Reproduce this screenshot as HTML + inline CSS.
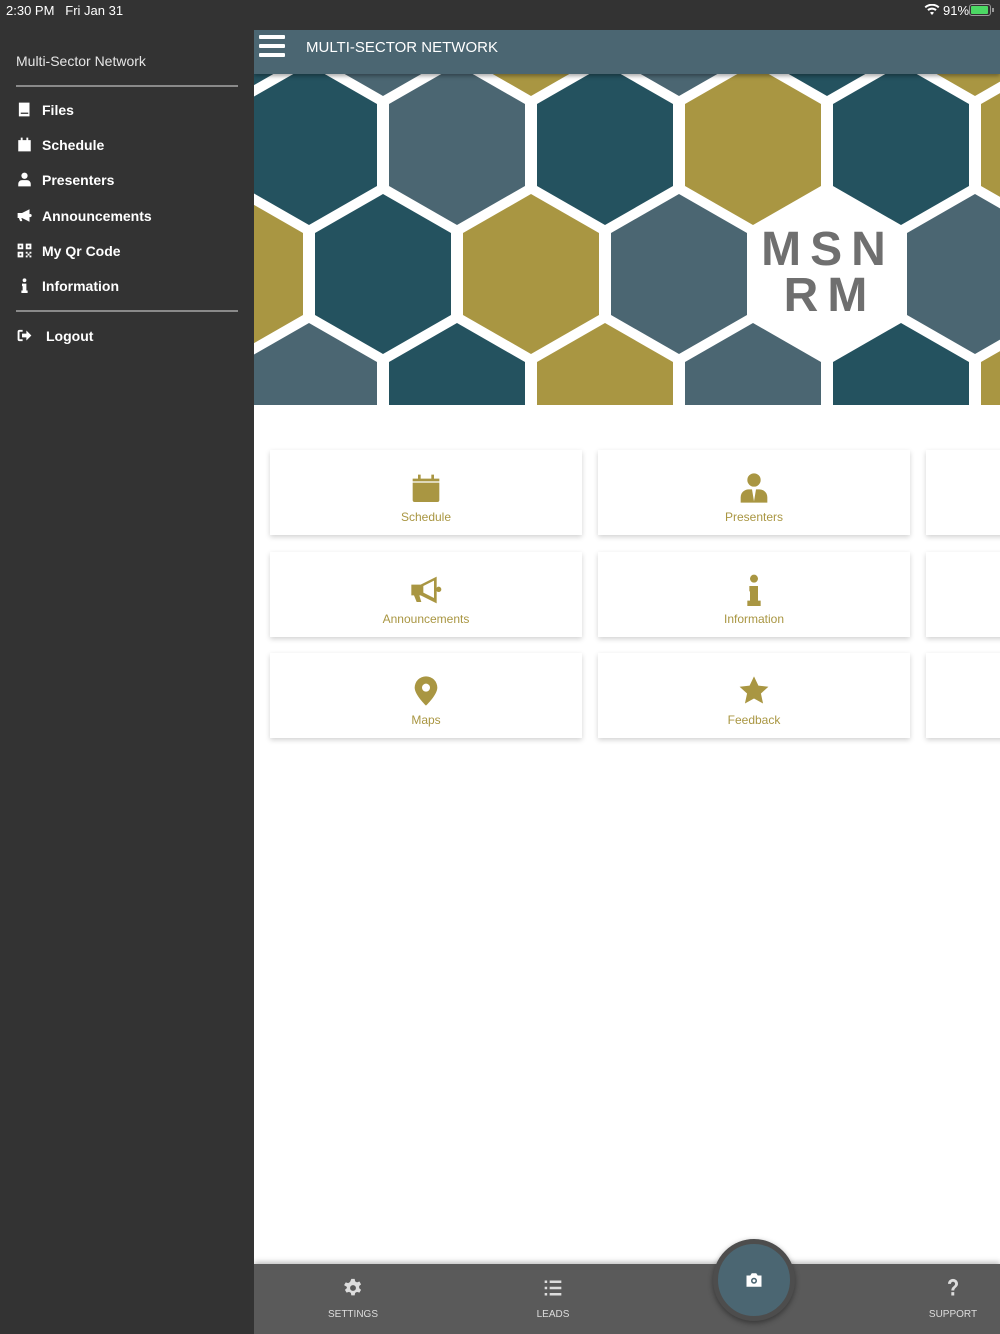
<!DOCTYPE html>
<html><head><meta charset="utf-8">
<style>
*{margin:0;padding:0;box-sizing:border-box}
body{width:1000px;height:1334px;overflow:hidden;background:#333;font-family:"Liberation Sans",sans-serif;position:relative}
.status{position:absolute;left:0;top:0;width:1000px;height:30px;background:#333;color:#fff;font-size:13px}
.side{position:absolute;left:0;top:30px;width:254px;height:1304px;background:#333}
.side .t{position:absolute;left:16px;top:23px;color:#e6e6e6;font-size:14px}
.side .ln{position:absolute;left:16px;width:222px;height:2px;background:#8a8a8a}
.item{position:absolute;left:0;height:20px;width:254px;color:#fff;font-weight:bold;font-size:14px}
.item svg{position:absolute;left:17px;top:2px;width:15px;height:15px;fill:#fff}
.item span{position:absolute;left:42px;top:2px}
.main{position:absolute;left:254px;top:30px;width:746px;height:1304px;background:#fff;overflow:hidden}
.hdr{position:absolute;left:0;top:0;width:746px;height:44px;background:#4b6672;box-shadow:0 2px 4px rgba(0,0,0,.35);z-index:3}
.hdr .hb{position:absolute;left:5px;width:26px;height:4px;background:#fff;border-radius:1px}
.hdr .tt{position:absolute;left:52px;top:9px;color:#fff;font-size:15px}
.card{position:absolute;width:312px;height:85px;background:#fff;box-shadow:0 2px 5px rgba(0,0,0,.18)}
.card svg{position:absolute;left:50%;top:22px;width:32px;height:32px;margin-left:-16px;fill:#a99642}
.card span{position:absolute;left:0;width:100%;text-align:center;top:60px;color:#a99642;font-size:12px}
.bb{position:absolute;left:0;top:1234px;width:746px;height:70px;background:#5a5a5a;box-shadow:0 -2px 5px rgba(0,0,0,.25)}
.bi{position:absolute;top:14px;width:100px;margin-left:-50px;text-align:center;color:#ddd;font-size:10px}
.bi svg{display:block;margin:0 auto 11px;width:20px;height:20px;fill:#ddd}
.fab{position:absolute;left:459px;top:1209px;width:82px;height:82px;border-radius:50%;background:#4b6672;border:5px solid #4d4d4d;box-shadow:0 2px 6px rgba(0,0,0,.4)}
</style></head><body>
<div class="status">
<span style="position:absolute;left:6px;top:3px">2:30 PM&nbsp;&nbsp; Fri Jan 31</span>
<svg style="position:absolute;left:924px;top:4px" width="16" height="12" viewBox="0 0 16 12"><path d="M8 11l2-2.4a3 3 0 0 0-4 0z M3.3 5.4l1.3 1.5a5 5 0 0 1 6.8 0l1.3-1.5a7 7 0 0 0-9.4 0z M0.6 2.6l1.3 1.5a9.2 9.2 0 0 1 12.2 0l1.3-1.5a11 11 0 0 0-14.8 0z" fill="#fff"/></svg>
<span style="position:absolute;left:943px;top:3px">91%</span>
<div style="position:absolute;left:969px;top:4px;width:22px;height:12px;border:1px solid #999;border-radius:3px;padding:1px"><div style="width:17px;height:8px;background:#4cd964;border-radius:1px"></div></div>
<div style="position:absolute;left:992px;top:8px;width:2px;height:4px;background:#999"></div>
</div>
<div class="side">
<div class="t">Multi-Sector Network</div>
<div class="ln" style="top:55px"></div>
<div class="item" style="top:70px"><svg viewBox="0 0 24 24"><path d="M3 1h17v22H3z M6 17v2h12v-2z" fill-rule="evenodd"/></svg><span>Files</span></div>
<div class="item" style="top:105px"><svg viewBox="0 0 24 24"><path d="M2 5h20v18H2z M6 1h3v4H6z M15 1h3v4h-3z"/></svg><span>Schedule</span></div>
<div class="item" style="top:140px"><svg viewBox="0 0 24 24"><circle cx="12" cy="6" r="5"/><path d="M2 23v-4a6 6 0 0 1 6-6h8a6 6 0 0 1 6 6v4z"/></svg><span>Presenters</span></div>
<div class="item" style="top:176px"><svg viewBox="0 0 24 24"><path d="M1 8h7l12-6v20l-12-6H7l1.5 5h-3.5L3 16H1z"/><circle cx="21" cy="12" r="2.5"/></svg><span>Announcements</span></div>
<div class="item" style="top:211px"><svg viewBox="0 0 24 24"><path d="M1 1h9v9H1z M4 4v3h3V4z M14 1h9v9h-9z M17 4v3h3V4z M1 14h9v9H1z M4 17v3h3v-3z M14 14h3v3h-3z M20 14h3v3h-3z M17 17h3v3h-3z M14 20h3v3h-3z M20 20h3v3h-3z" fill-rule="evenodd"/></svg><span>My Qr Code</span></div>
<div class="item" style="top:246px"><svg viewBox="0 0 24 24"><circle cx="12" cy="3.5" r="3"/><path d="M8 9h7v11h2v4H7v-4h2v-7H8z"/></svg><span>Information</span></div>
<div class="ln" style="top:280px"></div>
<div class="item" style="top:296px"><svg viewBox="0 0 24 24"><path d="M9 3H4a3 3 0 0 0-3 3v12a3 3 0 0 0 3 3h5v-3H4V6h5z M8 9h7V4l8 8-8 8v-5H8z"/></svg><span style="left:46px">Logout</span></div>
</div>
<div class="main">
<div class="hdr"><div class="hb" style="top:5px"></div><div class="hb" style="top:14px"></div><div class="hb" style="top:23px"></div><div class="tt">MULTI-SECTOR NETWORK</div></div>
<svg style="position:absolute;left:0;top:44px" width="746" height="331" viewBox="254 74 746 331">
<defs><polygon id="h" points="0,-80 68,-41 68,41 0,80 -68,41 -68,-41"/></defs>
<rect x="254" y="74" width="746" height="331" fill="#fff"/>
<use href="#h" x="235" y="16" fill="#24525f"/><use href="#h" x="383" y="16" fill="#4b6672"/><use href="#h" x="531" y="16" fill="#a99642"/><use href="#h" x="679" y="16" fill="#4b6672"/><use href="#h" x="827" y="16" fill="#24525f"/><use href="#h" x="975" y="16" fill="#a99642"/>
<use href="#h" x="309" y="145" fill="#24525f"/><use href="#h" x="457" y="145" fill="#4b6672"/><use href="#h" x="605" y="145" fill="#24525f"/><use href="#h" x="753" y="145" fill="#a99642"/><use href="#h" x="901" y="145" fill="#24525f"/><use href="#h" x="1049" y="145" fill="#a99642"/>
<use href="#h" x="235" y="274" fill="#a99642"/><use href="#h" x="383" y="274" fill="#24525f"/><use href="#h" x="531" y="274" fill="#a99642"/><use href="#h" x="679" y="274" fill="#4b6672"/><use href="#h" x="975" y="274" fill="#4b6672"/>
<use href="#h" x="309" y="403" fill="#4b6672"/><use href="#h" x="457" y="403" fill="#24525f"/><use href="#h" x="605" y="403" fill="#a99642"/><use href="#h" x="753" y="403" fill="#4b6672"/><use href="#h" x="901" y="403" fill="#24525f"/><use href="#h" x="1049" y="403" fill="#a99642"/>
<text x="828" y="265" text-anchor="middle" font-family="Liberation Sans, sans-serif" font-size="48" font-weight="bold" fill="#6f6f6f" letter-spacing="9">MSN</text>
<text x="830" y="311" text-anchor="middle" font-family="Liberation Sans, sans-serif" font-size="48" font-weight="bold" fill="#6f6f6f" letter-spacing="9">RM</text>
</svg>
<div class="card" style="left:16px;top:420px"><svg viewBox="0 0 24 24"><path d="M2 5h20v2H2z M2 8h20v13a1.5 1.5 0 0 1-1.5 1.5h-17A1.5 1.5 0 0 1 2 21z M6 2h2v3H6z M16 2h2v3h-2z"/></svg><span>Schedule</span></div>
<div class="card" style="left:344px;top:420px"><svg viewBox="0 0 24 24"><circle cx="12" cy="6" r="5"/><path d="M2 23v-4a6 6 0 0 1 6-6h2.5l1.5 9 1.5-9H16a6 6 0 0 1 6 6v4z"/></svg><span>Presenters</span></div>
<div class="card" style="left:672px;top:420px"></div>
<div class="card" style="left:16px;top:522px"><svg viewBox="0 0 24 24"><path d="M1 8h7l12-6v20l-12-6H7l1.5 5h-3.5L3 16H1z M10 9v5l8 4V5z" fill-rule="evenodd"/><circle cx="21.5" cy="11.5" r="2"/></svg><span>Announcements</span></div>
<div class="card" style="left:344px;top:522px"><svg viewBox="0 0 24 24"><circle cx="12" cy="3.5" r="3"/><path d="M8.5 9h6.5v11h2v4H7v-4h2v-7H8.5z"/></svg><span>Information</span></div>
<div class="card" style="left:672px;top:522px"></div>
<div class="card" style="left:16px;top:623px"><svg viewBox="0 0 24 24"><path d="M12 1a8.5 8.5 0 0 1 8.5 8.5C20.5 15 12 23 12 23S3.5 15 3.5 9.5A8.5 8.5 0 0 1 12 1z M12 6.5a3 3 0 1 0 0.01 0z" fill-rule="evenodd"/></svg><span>Maps</span></div>
<div class="card" style="left:344px;top:623px"><svg viewBox="0 0 24 24"><path d="M12 1l3.3 7 7.5.8-5.6 5.1 1.6 7.5L12 17.6l-6.8 3.8 1.6-7.5L1.2 8.8l7.5-.8z"/></svg><span>Feedback</span></div>
<div class="card" style="left:672px;top:623px"></div>
<div class="bb">
<div class="bi" style="left:99px"><svg viewBox="0 0 24 24"><path d="M10 1h4l.6 3 2.2 1.2 2.9-1 2 3.4-2.3 2 0 2.6 2.3 2-2 3.4-2.9-1-2.2 1.2-.6 3h-4l-.6-3-2.2-1.2-2.9 1-2-3.4 2.3-2V10.6L1.3 8.6l2-3.4 2.9 1L8.4 4.8z M12 8.5a3.5 3.5 0 1 0 .01 0z" fill-rule="evenodd"/></svg>SETTINGS</div>
<div class="bi" style="left:299px"><svg viewBox="0 0 24 24"><path d="M2 3h3v3H2z M8 3h14v3H8z M2 10.5h3v3H2z M8 10.5h14v3H8z M2 18h3v3H2z M8 18h14v3H8z"/></svg>LEADS</div>
<div class="bi" style="left:699px"><svg viewBox="0 0 24 24"><path d="M6 7a6 6 0 0 1 12 0c0 4-4.5 4.5-4.5 8h-3.5c0-5 4.5-5 4.5-8a2.5 2.5 0 0 0-5 0z M10 17h3.5v4H10z"/></svg>SUPPORT</div>
</div>
<div class="fab"><svg style="position:absolute;left:27px;top:27px" width="18" height="18" viewBox="0 0 24 24"><path d="M2 6h5l2-3h6l2 3h5v15H2z M12 9a4 4 0 1 0 .01 0z M12 11a2 2 0 1 1-.01 0z" fill="#fff" fill-rule="evenodd"/></svg></div>
</div>
</body></html>
